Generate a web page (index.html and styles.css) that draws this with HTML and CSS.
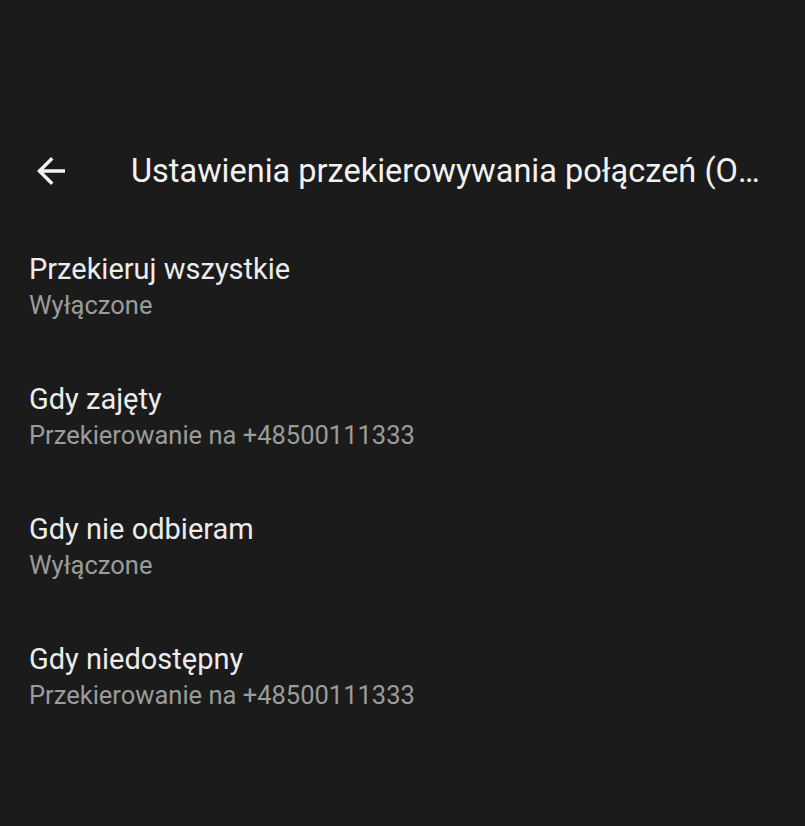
FILE: index.html
```html
<!DOCTYPE html>
<html>
<head>
  <title>Ustawienia przekierowywania połączeń</title>
  <link rel="stylesheet" href="styles.css">
</head>
<body>

  <div class="screen">
    <!-- toolbar -->
    <div class="header">
      <div class="toolbar">
        <button class="back" type="button">
          <svg width="42" height="42" viewBox="0 0 24 24"><path d="M20 11H7.83l5.59-5.59L12 4l-8 8 8 8 1.41-1.41L7.83 13H20v-2z" fill="#f2f2f2"/></svg>
        </button>
        <h1 class="title">Ustawienia przekierowywania połączeń (Orange)</h1>
      </div>
    </div>

    <!-- preference list -->
    <div class="list">
      <div class="item">
        <div class="item-title">Przekieruj wszystkie</div>
        <div class="item-summary">Wyłączone</div>
      </div>
      <div class="item">
        <div class="item-title">Gdy zajęty</div>
        <div class="item-summary">Przekierowanie na +48500111333</div>
      </div>
      <div class="item">
        <div class="item-title">Gdy nie odbieram</div>
        <div class="item-summary">Wyłączone</div>
      </div>
      <div class="item">
        <div class="item-title">Gdy niedostępny</div>
        <div class="item-summary">Przekierowanie na +48500111333</div>
      </div>
    </div>
  </div>

</body>
</html>
```

FILE: styles.css
```css
body {
  margin: 0;
  padding: 0;
  background: #1b1b1b;
  font-family: Roboto, 'Noto Sans', sans-serif;
  color: #ececec;
}

.screen {
  height: 826px;
  overflow: hidden;
}

.header {
  padding-top: 123px;
  border-bottom: 1px solid #171717;
}

.toolbar {
  height: 96px;
  display: flex;
  align-items: center;
}

.back {
  width: 42px;
  height: 42px;
  margin-left: 30px;
  padding: 0;
  border: none;
  background: none;
  display: flex;
  cursor: pointer;
}

.title {
  margin: 0 0 0 59px;
  width: 630px;
  font-size: 32.5px;
  font-weight: 400;
  color: #f2f2f2;
  white-space: nowrap;
  overflow: hidden;
  text-overflow: ellipsis;
}

.list {
  padding-top: 1px;
}

.item {
  padding: 29px 29px;
}

.item-title {
  font-size: 29px;
  line-height: 38px;
  color: #ececec;
}

.item-summary {
  font-size: 25.5px;
  line-height: 34px;
  color: #9b9b9b;
}
```
